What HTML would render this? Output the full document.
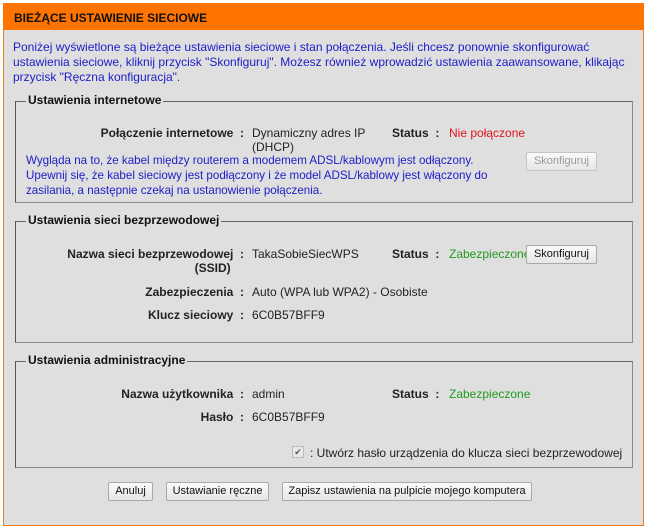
<!DOCTYPE html>
<html><head><meta charset="utf-8"><style>
*{margin:0;padding:0;box-sizing:border-box}
body{width:647px;height:529px;background:#fff;font-family:"Liberation Sans",sans-serif;font-size:12px;color:#222;position:relative;overflow:hidden}
.box{position:absolute;left:3px;top:3px;width:641px;height:523px;background:#dfdfdf;border:1px solid #f07a1a}
.hdr{position:absolute;left:3px;top:3px;width:641px;height:27px;background:#ff7400;font-weight:bold;font-size:12px;color:#111;padding:8px 0 0 11px}
.a{position:absolute;white-space:nowrap}
.b{font-weight:bold}
.r{text-align:right}
.blue{color:#1c1cc8}
.fs{position:absolute;left:15px;width:618px;border:1px solid #8a8a8a;border-left-color:#555;border-top-color:#666}
.lg{position:absolute;left:10px;top:-9px;background:#dfdfdf;font-weight:bold;font-size:12px;padding:0 2px;color:#111}
.btn{position:absolute;height:19px;background:linear-gradient(#fafafa,#e6e6e6);border:1px solid #a9a9a9;border-radius:2px;font-size:11px;text-align:center;line-height:17px;color:#111}
</style></head><body>
<div class="box"></div>
<div class="hdr">BIEŻĄCE USTAWIENIE SIECIOWE</div>
<div class="a blue" style="left:13px;top:40px;line-height:15px">Poniżej wyświetlone są bieżące ustawienia sieciowe i stan połączenia. Jeśli chcesz ponownie skonfigurować<br>ustawienia sieciowe, kliknij przycisk "Skonfiguruj". Możesz również wprowadzić ustawienia zaawansowane, klikając<br>przycisk "Ręczna konfiguracja".</div>

<div class="fs" style="top:101px;height:102px"><div class="lg">Ustawienia internetowe</div></div>
<div class="a b r" style="right:403px;top:126px">Połączenie internetowe&nbsp; :</div>
<div class="a" style="left:252px;top:126px;line-height:14px">Dynamiczny adres IP<br>(DHCP)</div>
<div class="a b" style="left:392px;top:126px">Status&nbsp; :</div>
<div class="a" style="left:449px;top:126px;color:#e0141e">Nie połączone</div>
<div class="a blue" style="left:26px;top:153px;line-height:15px;font-size:11.6px">Wygląda na to, że kabel między routerem a modemem ADSL/kablowym jest odłączony.<br>Upewnij się, że kabel sieciowy jest podłączony i że model ADSL/kablowy jest włączony do<br>zasilania, a następnie czekaj na ustanowienie połączenia.</div>
<div class="btn" style="left:526px;top:152px;width:71px;color:#999;border-color:#c4c4c4">Skonfiguruj</div>

<div class="fs" style="top:221px;height:122px"><div class="lg">Ustawienia sieci bezprzewodowej</div></div>
<div class="a b r" style="right:403px;top:247px;line-height:14px">Nazwa sieci bezprzewodowej&nbsp; :<br>(SSID)&nbsp;&nbsp;&nbsp;&nbsp;</div>
<div class="a" style="left:252px;top:247px">TakaSobieSiecWPS</div>
<div class="a b" style="left:392px;top:247px">Status&nbsp; :</div>
<div class="a" style="left:449px;top:247px;color:#1f9a1f">Zabezpieczone</div>
<div class="btn" style="left:526px;top:245px;width:71px">Skonfiguruj</div>
<div class="a b r" style="right:403px;top:285px">Zabezpieczenia&nbsp; :</div>
<div class="a" style="left:252px;top:285px">Auto (WPA lub WPA2) - Osobiste</div>
<div class="a b r" style="right:403px;top:308px">Klucz sieciowy&nbsp; :</div>
<div class="a" style="left:252px;top:308px">6C0B57BFF9</div>

<div class="fs" style="top:361px;height:107px"><div class="lg">Ustawienia administracyjne</div></div>
<div class="a b r" style="right:403px;top:387px">Nazwa użytkownika&nbsp; :</div>
<div class="a" style="left:252px;top:387px">admin</div>
<div class="a b" style="left:392px;top:387px">Status&nbsp; :</div>
<div class="a" style="left:449px;top:387px;color:#1f9a1f">Zabezpieczone</div>
<div class="a b r" style="right:403px;top:410px">Hasło&nbsp; :</div>
<div class="a" style="left:252px;top:410px">6C0B57BFF9</div>
<div class="a" style="left:292px;top:446px;width:12px;height:12px;border:1px solid #bbb;background:#e8e8e8;font-size:9px;line-height:10px;text-align:center;color:#555">✔</div>
<div class="a" style="left:310px;top:446px">: Utwórz hasło urządzenia do klucza sieci bezprzewodowej</div>

<div class="btn" style="left:108px;top:482px;width:45px">Anuluj</div>
<div class="btn" style="left:166px;top:482px;width:103px">Ustawianie ręczne</div>
<div class="btn" style="left:282px;top:482px;width:250px">Zapisz ustawienia na pulpicie mojego komputera</div>
</body></html>
